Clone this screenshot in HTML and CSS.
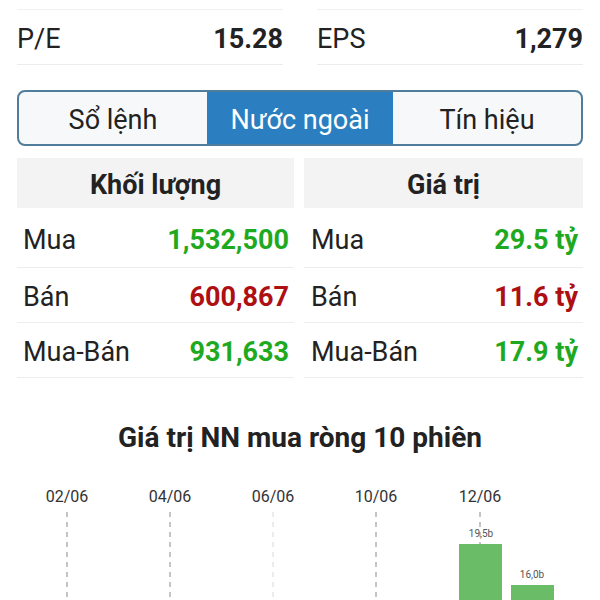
FILE: index.html
```html
<!DOCTYPE html>
<html lang="vi">
<head>
  <meta charset="UTF-8">
  <meta name="viewport" content="width=device-width, initial-scale=1.0">
  <title>Nước ngoài</title>
  <link rel="stylesheet" href="styles.css">
</head>
<body>
  <div class="stats">
    <div class="stat"><span>P/E</span><b>15.28</b></div>
    <div class="stat"><span>EPS</span><b>1,279</b></div>
  </div>

  <div class="tabs">
    <div class="tab">Sổ lệnh</div>
    <div class="tab active">Nước ngoài</div>
    <div class="tab">Tín hiệu</div>
  </div>

  <div class="foreign">
    <div class="col">
      <div class="head">Khối lượng</div>
      <div class="row"><span>Mua</span><b class="up">1,532,500</b></div>
      <div class="row"><span>Bán</span><b class="down">600,867</b></div>
      <div class="row"><span>Mua-Bán</span><b class="up">931,633</b></div>
    </div>
    <div class="col right">
      <div class="head">Giá trị</div>
      <div class="row"><span>Mua</span><b class="up">29.5 tỷ</b></div>
      <div class="row"><span>Bán</span><b class="down">11.6 tỷ</b></div>
      <div class="row"><span>Mua-Bán</span><b class="up">17.9 tỷ</b></div>
    </div>
  </div>

  <h2 class="title">Giá trị NN mua ròng 10 phiên</h2>

  <svg class="chart" width="600" height="140" viewBox="0 0 600 140">
    <!-- ngày -->
    <g class="dates">
      <text x="67" y="34">02/06</text>
      <text x="170" y="34">04/06</text>
      <text x="273" y="34">06/06</text>
      <text x="376" y="34">10/06</text>
      <text x="480" y="34">12/06</text>
    </g>
    <g class="grid">
      <line x1="67" y1="44" x2="67" y2="140"/>
      <line x1="170" y1="44" x2="170" y2="140"/>
      <line class="faint" x1="273" y1="44" x2="273" y2="140"/>
      <line x1="376" y1="44" x2="376" y2="140"/>
      <line x1="480" y1="44" x2="480" y2="76"/>
    </g>
    <!-- cột -->
    <rect class="bar" x="459" y="76" width="43" height="64"/>
    <rect class="bar" x="511" y="117" width="43" height="23"/>
    <g class="vals">
      <text x="481" y="69">19,5b</text>
      <text x="532" y="110">16,0b</text>
    </g>
  </svg>
</body>
</html>
```

FILE: styles.css
```css
body{
  margin: 0;
  width: 600px;
  background: #fff;
  color: #222;
  font-family: Roboto, "Noto Sans", sans-serif;
}
/* P/E, EPS */
.stats{
  display: flex;
  gap: 34px;
  padding: 9px 17px 0;
}
.stat{
  flex: 1;
  display: flex;
  justify-content: space-between;
  align-items: center;
  height: 54px;
  border-top: 1px solid #f0f0f0;
  border-bottom: 1px solid #ececec;
  font-size: 27px;
}
.stat span{
  padding-top: 3px;
}
.stat b{
  padding-top: 3px;
  font-weight: 700;
}
/* tab */
.tabs{
  display: flex;
  margin: 25px 17px 0;
  height: 52px;
  border: 2px solid #4f7d9b;
  border-radius: 8px;
  overflow: hidden;
  background: #f7f8f9;
}
.tab{
  flex: 1;
  display: flex;
  justify-content: center;
  align-items: center;
  padding-top: 4px;
  font-size: 27px;
  color: #222;
}
.tab.active{
  flex: 0 0 186px;
  background: #2b7fc0;
  color: #fff;
}
/* khối lượng / giá trị */
.foreign{
  display: flex;
  gap: 10px;
  margin: 12px 17px 0;
}
.col{
  flex: 0 0 277px;
}
.col.right{
  flex: 1;
}
.head{
  height: 50px;
  display: flex;
  justify-content: center;
  align-items: center;
  padding-top: 4px;
  box-sizing: border-box;
  background: #f3f3f3;
  font-size: 27px;
  font-weight: 700;
  color: #222;
  margin-bottom: 2px;
}
.row{
  display: flex;
  justify-content: space-between;
  align-items: center;
  height: 55px;
  padding: 3px 5px 0 6px;
  box-sizing: border-box;
  border-bottom: 1px solid #ededed;
  font-size: 27px;
}
.row:nth-child(2){
  height: 58px;
}
.right .row{
  padding-left: 7px;
}
.row b{
  font-weight: 700;
}
.up{
  color: #1fa91f;
}
.down{
  color: #ae0f12;
}
/* biểu đồ */
.title{
  margin: 45px 0 0;
  text-align: center;
  font-size: 28px;
  line-height: 30px;
  font-weight: 700;
  color: #222;
}
.chart{
  display: block;
  margin-top: 15px;
}
.dates text{
  font-family: Roboto, sans-serif;
  font-size: 16px;
  fill: #333;
  text-anchor: middle;
}
.grid line{
  stroke: #8a8a8a;
  stroke-width: 1;
  stroke-dasharray: 5 5;
}
.grid line.faint{
  stroke: #d8d8d8;
}
.bar{
  fill: #6abd66;
}
.vals text{
  font-family: Roboto, sans-serif;
  font-size: 10px;
  fill: #555;
  text-anchor: middle;
}
```
